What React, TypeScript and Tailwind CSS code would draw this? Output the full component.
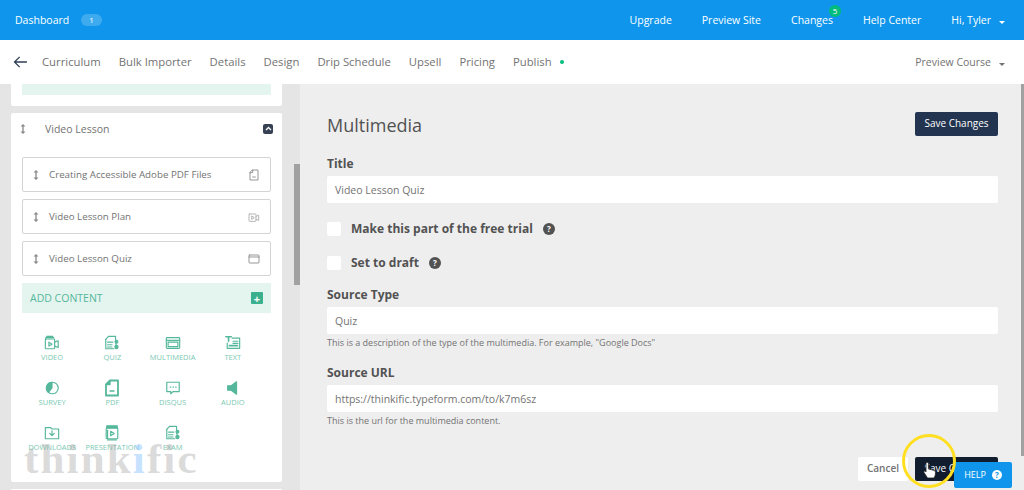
import React from "react";

const green = "#55b79b";

function Svg({ children, size = 16, color = green }: { children: React.ReactNode; size?: number; color?: string }) {
  return (
    <svg width={size} height={size} viewBox="0 0 18 18" fill="none" stroke={color} strokeWidth="1.3" strokeLinejoin="round" strokeLinecap="round">
      {children}
    </svg>
  );
}

const VideoI = () => (
  <Svg>
    <path d="M3 1.500h7M2 5V3h9" />
    <rect x="1.500" y="4.500" width="10.500" height="11" rx="1" />
    <path d="M12 8l4-1.500v7.500l-4-1.500" />
    <path d="M5.500 8v4.500l3.500-2.200z" />
  </Svg>
);
const QuizI = () => (
  <Svg>
    <path d="M2 5l3-3.500h8v5" />
    <path d="M2 5v10.500h9" />
    <path d="M4 8h6M4 11h5M4 13.500h5" />
    <circle cx="14" cy="7.500" r="1.600" fill={green} />
    <circle cx="14" cy="13.500" r="1.800" fill={green} />
    <path d="M13 9l1 3" />
  </Svg>
);
const MediaI = () => (
  <Svg>
    <rect x="1.500" y="3" width="15" height="12" rx="1" />
    <path d="M1.500 6h15" />
    <rect x="3.500" y="8" width="11" height="5" />
  </Svg>
);
const TextI = () => (
  <Svg>
    <path d="M1 2h6M4 2v5" strokeWidth="1.800" />
    <path d="M8 3.500h8.500v11.500H2.500V9" />
    <path d="M9 7h5.500M9 9.500h5.500" />
    <path d="M5 12h9" strokeWidth="2" />
  </Svg>
);
const SurveyI = () => (
  <Svg>
    <circle cx="9.500" cy="9" r="6.500" />
    <path d="M9 2.500A6.500 6.500 0 0 0 5 14l4-5z" fill={green} />
  </Svg>
);
const PdfI = () => (
  <Svg size={18}>
    <path d="M7 1.500h8v15H3V5.500z" strokeWidth="1.800" />
    <path d="M3 5.500h4v-4" fill={green} />
    <path d="M7 12h4" />
  </Svg>
);
const DisqusI = () => (
  <Svg>
    <path d="M2 2.500h14v10.500H9l-2.500 2.500V13H2z" />
    <path d="M6 8h.5M9 8h.5M12 8h.5" strokeWidth="1.500" />
  </Svg>
);
const AudioI = () => (
  <Svg>
    <path d="M3 6.500h4L13 2v14l-6-4.500H3z" fill={green} />
  </Svg>
);
const DownloadsI = () => (
  <Svg>
    <path d="M1.500 3h6l1.500 1.500h7.500v11h-15z" />
    <path d="M9 6.500v5M6.500 9.500L9 12l2.500-2.500" />
  </Svg>
);
const PresentationI = () => (
  <Svg>
    <rect x="3" y="1" width="12" height="2" fill={green} />
    <rect x="2.500" y="3.500" width="13" height="12" rx="1" />
    <path d="M4 6v9" />
    <path d="M7.500 7v5l4-2.500z" />
    <path d="M4 16.800h10" />
  </Svg>
);

const Drag = () => (
  <svg width="6" height="10" viewBox="0 0 7 12" fill="#8a8a8a" className="shrink-0">
    <path d="M3.500 0L6.500 3H4.300v6H6.500L3.500 12 .5 9h2.200V3H.5z" />
  </svg>
);

const items: [string, React.ComponentType][] = [
  ["VIDEO", VideoI],
  ["QUIZ", QuizI],
  ["MULTIMEDIA", MediaI],
  ["TEXT", TextI],
  ["SURVEY", SurveyI],
  ["PDF", PdfI],
  ["DISQUS", DisqusI],
  ["AUDIO", AudioI],
  ["DOWNLOADS", DownloadsI],
  ["PRESENTATION", PresentationI],
  ["EXAM", QuizI],
];

function Row({ label, icon }: { label: string; icon: React.ReactNode }) {
  return (
    <div className="flex h-[35px] items-center justify-between rounded-xs border border-neutral-300 pl-2.5 pr-2.5">
      <div className="flex items-center gap-2.5">
        <Drag />
        <span className="text-[9.750px] text-neutral-500">{label}</span>
      </div>
      {icon}
    </div>
  );
}

function Help() {
  return (
    <span className="flex size-3 items-center justify-center rounded-full bg-neutral-600 text-[8px] font-bold text-white">?</span>
  );
}

function Field({ label, value, hint }: { label: string; value: string; hint?: string }) {
  return (
    <div className="flex flex-col">
      <div className="text-xs font-bold leading-5 text-neutral-600">{label}</div>
      <div className="mt-0.5 flex h-[27px] items-center rounded-xs bg-white px-2 text-[10.500px] text-neutral-500">{value}</div>
      {hint && <div className="mt-[3px] text-[9px] leading-3 text-neutral-500">{hint}</div>}
    </div>
  );
}

export default function App() {
  return (
    <div className="relative flex h-[490px] w-[1024px] flex-col overflow-hidden bg-[#eeeeee] text-xs" style={{ fontFamily: '"Open Sans", sans-serif' }}>
      <header className="flex h-10 shrink-0 items-center justify-between bg-[#0f96ec] pl-[15px] pr-[33px] text-[10.500px] text-white">
        <div className="flex items-center gap-3">
          <span>Dashboard</span>
          <span className="rounded-full bg-white/20 px-2 text-[8px] leading-3">1</span>
        </div>
        <nav className="flex items-center gap-[30px]">
          <span>Upgrade</span>
          <span>Preview Site</span>
          <span className="relative">
            Changes
            <span className="absolute -right-2 -top-2 flex size-3 items-center justify-center rounded-full bg-emerald-500 text-[8px]">5</span>
          </span>
          <span>Help Center</span>
          <span className="relative">
            Hi, Tyler
            <span className="absolute -right-3.5 top-2 border-x-[3px] border-t-[3px] border-x-transparent border-t-white" />
          </span>
        </nav>
      </header>

      <div className="z-10 flex h-11 shrink-0 items-center justify-between bg-white pl-[13px] pr-[33px] text-[11.300px] text-neutral-500">
        <div className="flex items-center gap-[18px]">
          <svg width="15" height="12" viewBox="0 0 16 14" fill="none" stroke="#2f3f55" strokeWidth="1.500" className="-mr-1">
            <path d="M15.500 7H1M7 1L1 7l6 6" />
          </svg>
          <span>Curriculum</span>
          <span>Bulk Importer</span>
          <span>Details</span>
          <span>Design</span>
          <span>Drip Schedule</span>
          <span>Upsell</span>
          <span>Pricing</span>
          <span className="flex items-center gap-2">
            Publish
            <span className="size-1 rounded-full bg-emerald-500" />
          </span>
        </div>
        <div className="relative text-[10.500px]">
          Preview Course
          <span className="absolute -right-3.5 top-2 border-x-[3px] border-t-[3px] border-x-transparent border-t-neutral-500" />
        </div>
      </div>

      <main className="flex min-h-0 flex-1">
        <aside className="relative flex w-[300px] shrink-0 flex-col gap-[7px] bg-neutral-200 pl-[11px] pr-[18px]">
          <div className="h-[22px] shrink-0 rounded-b-xs bg-white px-[11px]">
            <div className="h-[11px] bg-[#e4f5f0]" />
          </div>
          <div className="flex h-[369px] shrink-0 flex-col rounded-xs bg-white px-[11px]">
            <div className="flex h-[31px] shrink-0 items-center justify-between">
              <div className="-ml-0.5 flex items-center gap-[19px] text-[10.500px] text-neutral-500">
                <Drag />
                <span>Video Lesson</span>
              </div>
              <span className="-mr-0.5 flex size-2.5 items-center justify-center rounded-xs bg-gray-700">
                <svg width="7" height="5" viewBox="0 0 7 5" fill="none" stroke="white" strokeWidth="1.300"><path d="M1 4l2.500-2.500L6 4" /></svg>
              </span>
            </div>
            <div className="mt-[13px] flex flex-col gap-[7px]">
              <Row label="Creating Accessible Adobe PDF Files" icon={<Svg size={12} color="#888"><path d="M7 1.500h8v15H3V5.500z" /><path d="M3 5.500h4v-4" /><path d="M7 12h4" /></Svg>} />
              <Row label="Video Lesson Plan" icon={<Svg size={12} color="#aaa"><rect x="1.500" y="4.500" width="10.500" height="11" rx="1" /><path d="M12 8l4-1.500v7.500l-4-1.500M5.500 8v4.500l3.500-2.200z" /></Svg>} />
              <Row label="Video Lesson Quiz" icon={<Svg size={12} color="#888"><rect x="1.500" y="3" width="15" height="12" rx="1" /><path d="M1.500 6h15" /></Svg>} />
            </div>
            <div className="mt-[7px] flex h-[30px] shrink-0 items-center justify-between bg-[#e4f5f0] pl-2 pr-2 text-[10.500px] text-[#55b79b]">
              <span>ADD CONTENT</span>
              <span className="flex size-3 items-center justify-center rounded-[1px] bg-[#3bb08f] text-[11px] font-bold leading-none text-white">+</span>
            </div>
            <div className="mt-[22px] grid grid-cols-4 gap-y-[19px] pr-2">
              {items.map(([label, Icon]) => (
                <div key={label} className="flex h-[26px] flex-col items-center justify-between">
                  <div className="flex h-4 items-center"><Icon /></div>
                  <span className="text-[7.500px] leading-none whitespace-nowrap text-[#7cc9b3]">{label}</span>
                </div>
              ))}
            </div>
          </div>
          <div className="flex-1 rounded-t-xs bg-white" />
          <div className="absolute right-0 top-20 h-[121px] w-1.5 bg-neutral-400" />
        </aside>

        <section className="relative flex flex-1 flex-col pl-[27px] pr-[26px] pt-[27px]">
          <div className="flex items-center justify-between">
            <h1 className="mt-0.5 text-lg leading-6 text-neutral-600">Multimedia</h1>
            <button className="h-6 w-[83px] rounded-xs bg-[#22344f] text-[10px] text-white">Save Changes</button>
          </div>
          <div className="mt-[17px]">
            <Field label="Title" value="Video Lesson Quiz" />
          </div>
          <label className="mt-[19px] flex h-3.5 items-center gap-2.5 text-xs font-bold text-neutral-600">
            <span className="size-3.5 rounded-xs bg-white" />
            Make this part of the free trial
            <Help />
          </label>
          <label className="mt-5 flex h-3.5 items-center gap-2.5 text-xs font-bold text-neutral-600">
            <span className="size-3.5 rounded-xs bg-white" />
            Set to draft
            <Help />
          </label>
          <div className="mt-[15px]">
            <Field label="Source Type" value="Quiz" hint={'This is a description of the type of the multimedia. For example, "Google Docs"'} />
          </div>
          <div className="mt-3.5">
            <Field label="Source URL" value="https://thinkific.typeform.com/to/k7m6sz" hint="This is the url for the multimedia content." />
          </div>
          <div className="mt-auto mb-[9px] flex justify-end gap-[7px]">
            <button className="h-6 w-[50px] rounded-xs bg-white text-[10px] font-semibold text-neutral-500">Cancel</button>
            <button className="h-6 w-[83px] rounded-xs bg-[#111c2e] text-[10px] text-white">Save Changes</button>
          </div>
          <div className="absolute right-0 top-0 h-[372px] w-[3px] bg-neutral-400" />
        </section>
      </main>

      <div className="absolute bottom-2.5 left-6 text-[43px] font-bold leading-none tracking-wider text-neutral-400/40" style={{ fontFamily: '"Liberation Serif", serif' }}>
        think<span className="text-blue-300/50">i</span>fic
      </div>

      <div className="absolute bottom-0.5 left-[954px] flex h-[26px] w-[58px] items-center justify-center gap-1.5 rounded-xs bg-[#0f96ec] text-[9px] text-white">
        HELP
        <span className="flex size-2.5 items-center justify-center rounded-full bg-white text-[8px] font-bold text-[#0f96ec]">?</span>
      </div>

      <div className="absolute left-[902px] top-[434px] size-[54px] rounded-full border-[3px] border-yellow-300" />
      <svg className="absolute left-[923px] top-[462px]" width="14" height="18" viewBox="0 0 14 18" fill="white" stroke="#222" strokeWidth="0.800">
        <path d="M3 1.500a1.200 1.200 0 0 1 2.400 0V7l5 1.200c1.500.4 2.100 1.200 2.100 2.500 0 2-.5 3.500-1.500 5.300H4.500L1 10.500c-.5-1 .5-2 1.500-1.200L3 10z" />
      </svg>
    </div>
  );
}
